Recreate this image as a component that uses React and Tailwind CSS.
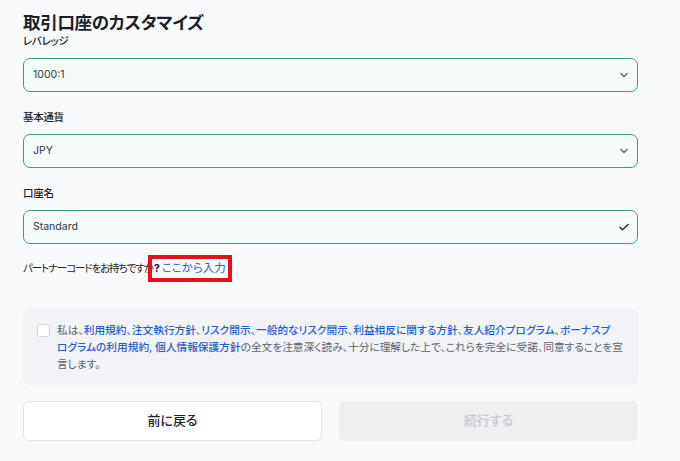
import React from "react";

const font = "font-['Inter','Noto_Sans_CJK_JP',sans-serif] [font-feature-settings:'palt']";

function Chevron() {
  return (
    <svg width="12" height="12" viewBox="0 0 24 24" fill="none" stroke="#6b7280" strokeWidth="3" strokeLinecap="round" strokeLinejoin="round">
      <path d="M6 9l6 6 6-6" />
    </svg>
  );
}
function Check() {
  return (
    <svg width="12" height="12" viewBox="0 0 24 24" fill="none" stroke="#1f3b46" strokeWidth="3.2" strokeLinecap="round" strokeLinejoin="round">
      <path d="M4 12.5l5 5L20 7" />
    </svg>
  );
}

function Field({ label, value, icon, mt }) {
  return (
    <div className={mt}>
      <div className="text-[10.5px] leading-[16px] text-[#1f2329] font-medium tracking-[-0.3px]">{label}</div>
      <div className="mt-[8px] h-[34px] w-[615px] rounded-[7px] border border-[#3a9f80] bg-[#f5fbf8] flex items-center justify-between pl-[9px] pr-[7px]">
        <span className="text-[10.5px] text-[#2f3a40]">{value}</span>
        {icon}
      </div>
    </div>
  );
}

const L = ({ children }) => <span className="text-[#1f5fd1] font-medium">{children}</span>;

export default function App() {
  return (
    <div className={`w-[680px] h-[461px] overflow-hidden bg-[#f9fafc] pl-[23px] pt-[12px] ${font}`}>
      <div className="relative w-[615px]">
        <h1 className="text-[17.5px] leading-[22px] font-bold text-[#1b1f27] tracking-[-0.3px]">取引口座のカスタマイズ</h1>
        <Field label="レバレッジ" value="1000:1" icon={<Chevron />} mt="" />
        <Field label="基本通貨" value="JPY" icon={<Chevron />} mt="mt-[18px]" />
        <Field label="口座名" value="Standard" icon={<Check />} mt="mt-[18px]" />
        <div className="mt-[16px] text-[10.5px] leading-[16px] text-[#1f2329] whitespace-nowrap">
          <span className="tracking-[-1.1px]">パートナーコードをお持ちですか</span>
          <span className="font-bold text-[11px] ml-[1px]">?</span>
          <span className="text-[#1f5fd1] ml-[2px] text-[11.5px]">ここから入力</span>
        </div>
        <div className="absolute left-[125px] top-[243px] w-[84px] h-[27px] border-[4px] border-[#e5101c]" />
        <div className="mt-[32px] w-[615px] h-[76px] rounded-[6px] bg-[#f2f3f6] flex pl-[14px] pr-[6px] pt-[14px]">
          <div className="w-[13px] h-[13px] shrink-0 rounded-[3px] border border-[#d2d5da] bg-white mt-[1px]" />
          <p className="ml-[7px] text-[10.7px] leading-[17px] text-[#5b616b] mt-[-1px] whitespace-nowrap">
            私は、<L>利用規約</L>、<L>注文執行方針</L>、<L>リスク開示</L>、<L>一般的なリスク開示</L>、<L>利益相反に関する方針</L>、<L>友人紹介プログラム</L>、<L>ボーナスプ<br />ログラムの利用規約</L><L>, </L><L>個人情報保護方針</L>の全文を注意深く読み、十分に理解した上で、これらを完全に受諾、同意することを宣<br />言します。
          </p>
        </div>
        <div className="mt-[16px] grid grid-cols-2 gap-[17px]">
          <button className="h-[40px] rounded-[6px] border border-[#e3e5e9] bg-white text-[13px] text-[#1f2329] font-medium">前に戻る</button>
          <button className="h-[40px] rounded-[6px] bg-[#eeeff1] text-[13px] text-[#c6c9ce] font-medium">続行する</button>
        </div>
      </div>
    </div>
  );
}
